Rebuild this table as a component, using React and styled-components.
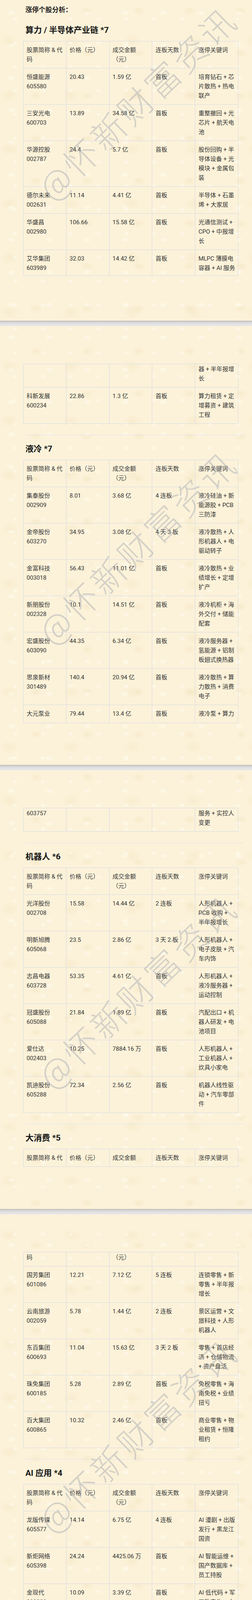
import React from 'react';
import styled, { createGlobalStyle } from 'styled-components';

const GlobalStyle = createGlobalStyle`
  html, body { margin: 0; padding: 0; }
  body {
    background-color: #fcf2d9;
    background-image:
      radial-gradient(ellipse 16px 10px at 30% 40%, rgba(255, 252, 240, 0.7), rgba(255, 252, 240, 0) 70%),
      radial-gradient(ellipse 24px 16px at 70% 25%, rgba(238, 220, 178, 0.35), rgba(238, 220, 178, 0) 70%),
      radial-gradient(ellipse 11px 8px at 55% 80%, rgba(255, 255, 248, 0.6), rgba(255, 255, 248, 0) 70%),
      radial-gradient(ellipse 34px 24px at 15% 75%, rgba(240, 222, 182, 0.3), rgba(240, 222, 182, 0) 70%);
    background-size: 97px 83px, 131px 109px, 71px 61px, 157px 139px;
    font-family: Roboto, "Noto Sans CJK SC", sans-serif;
    color: #333;
  }
`;

const Doc = styled.div`
  position: relative;
  width: 644px;
  overflow: hidden;
`;

const Page = styled.section`
  box-sizing: border-box;
  height: ${(p) => p.$h}px;
  padding-top: ${(p) => p.$top}px;
  overflow: hidden;
`;

const PageBreak = styled.div`
  height: 14px;
  background: linear-gradient(to bottom, #b9b9b9 0, #d2d2d2 22%, #e1e1e1 55%, #e9e9e9 100%);
`;

const Column = styled.div`
  margin-left: 65px;
  width: 558px;
`;

const Intro = styled.p`
  margin: 11px 0 0;
  font-size: 17px;
  line-height: 28px;
  font-weight: 700;
  color: #1e1e1e;
`;

const SectionTitle = styled.h3`
  margin: ${(p) => p.$mt}px 0 14px;
  font-size: 21px;
  line-height: 28px;
  font-weight: 700;
  color: #151515;
`;

const Rule = styled.hr`
  margin: 28px 0 0;
  border: 0;
  height: 1px;
  background: #dfe3ea;
`;

const Table = styled.table`
  width: 550px;
  margin-left: -6px;
  border-collapse: collapse;
  table-layout: fixed;
  font-size: 15px;
  line-height: 24px;
  color: #333;
`;

const cellCss = `
  border: 1px solid #d6dbe4;
  vertical-align: top;
  text-align: left;
  white-space: pre;
  font-weight: 400;
`;

const HeadCell = styled.th`
  ${cellCss}
  padding: ${(p) => p.$pt}px 8px ${(p) => p.$pb}px;
  color: #3a3a3a;
`;

const Cell = styled.td`
  ${cellCss}
  padding: ${(p) => p.$pt}px 8px ${(p) => p.$pb}px;
`;

const Watermark = styled.div`
  position: absolute;
  left: 349px;
  transform: translate(-50%, -50%) rotate(-44deg);
  white-space: nowrap;
  font-family: "Noto Sans CJK SC", sans-serif;
  font-weight: 300;
  font-size: 88px;
  line-height: 88px;
  letter-spacing: 8px;
  color: rgba(160, 165, 175, 0.42);
  pointer-events: none;
`;

const HEAD = ['股票简称 & 代\n码', '价格（元）', '成交金额\n（元）', '连板天数', '涨停关键词'];

const pages = [
  {
    h: 821,
    top: 0,
    blocks: [
      { t: 'intro', text: '涨停个股分析：' },
      { t: 'title', text: '算力 / 半导体产业链 *7', mt: 24 },
      {
        t: 'table',
        head: { c: HEAD },
        rows: [
          { c: ['恒盛能源\n605580', '20.43', '1.59 亿', '首板', '培育钻石 + 芯\n片散热 + 热电\n联产'] },
          { c: ['三安光电\n600703', '13.89', '34.58 亿', '首板', '重整撤回 + 光\n芯片 + 航天电\n池'] },
          { c: ['华源控股\n002787', '24.4', '5.7 亿', '首板', '股份回购 + 半\n导体设备 + 光\n模块 + 金属包\n装'] },
          { c: ['德尔未来\n002631', '11.14', '4.41 亿', '首板', '半导体 + 石墨\n烯 + 大家居'] },
          { c: ['华盛昌\n002980', '106.66', '15.58 亿', '首板', '光通信测试 +\nCPO + 中报增\n长'] },
          { c: ['艾华集团\n603989', '32.03', '14.42 亿', '首板', 'MLPC 薄膜电\n容器 + AI 服务'], pb: 7 },
        ],
      },
    ],
  },
  {
    h: 1123,
    top: 96,
    blocks: [
      {
        t: 'table',
        rows: [
          { c: ['', '', '', '', '器 + 半年报增\n长'], pt: 1 },
          { c: ['科新发展\n600234', '22.86', '1.3 亿', '首板', '算力租赁 + 定\n增募资 + 建筑\n工程'] },
        ],
      },
      { t: 'hr' },
      { t: 'title', text: '液冷 *7', mt: 21 },
      {
        t: 'table',
        head: { c: HEAD },
        rows: [
          { c: ['集泰股份\n002909', '8.01', '3.68 亿', '4 连板', '液冷硅油 + 新\n能源胶 + PCB\n三防漆'] },
          { c: ['金帝股份\n603270', '34.95', '3.08 亿', '4 天 3 板', '液冷散热 + 人\n形机器人 + 电\n驱动转子'] },
          { c: ['金富科技\n003018', '56.43', '11.01 亿', '首板', '液冷散热 + 业\n绩增长 + 定增\n扩产'] },
          { c: ['新朋股份\n002328', '10.1', '14.51 亿', '首板', '液冷机柜 + 海\n外交付 + 储能\n配套'] },
          { c: ['宏盛股份\n603090', '44.35', '6.34 亿', '首板', '液冷服务器 +\n氢能源 + 铝制\n板翅式换热器'] },
          { c: ['思泉新材\n301489', '140.4', '20.94 亿', '首板', '液冷散热 + 算\n力散热 + 消费\n电子'] },
          { c: ['大元泵业', '79.44', '13.4 亿', '首板', '液冷泵 + 算力'], pb: 11 },
        ],
      },
    ],
  },
  {
    h: 1123,
    top: 96,
    blocks: [
      {
        t: 'table',
        rows: [{ c: ['603757', '', '', '', '服务 + 实控人\n变更'], pt: 1 }],
      },
      { t: 'hr' },
      { t: 'title', text: '机器人 *6', mt: 21 },
      {
        t: 'table',
        head: { c: HEAD },
        rows: [
          { c: ['光洋股份\n002708', '15.58', '14.44 亿', '2 连板', '人形机器人 +\nPCB 收购 +\n半年报增长'] },
          { c: ['明新旭腾\n605068', '23.5', '2.86 亿', '3 天 2 板', '人形机器人 +\n电子皮肤 + 汽\n车内饰'] },
          { c: ['志昌电器\n603728', '53.35', '4.61 亿', '首板', '人形机器人 +\n液冷服务器 +\n运动控制'] },
          { c: ['冠盛股份\n605088', '21.84', '1.89 亿', '首板', '汽配出口 + 机\n器人研发 + 电\n池项目'] },
          { c: ['爱仕达\n002403', '10.25', '7884.16 万', '首板', '人形机器人 +\n工业机器人 +\n炊具小家电'] },
          { c: ['凯迪股份\n605288', '72.34', '2.56 亿', '首板', '机器人线性驱\n动 + 汽车零部\n件'] },
        ],
      },
      { t: 'hr' },
      { t: 'title', text: '大消费 *5', mt: 21 },
      {
        t: 'table',
        head: { c: ['股票简称 & 代', '价格（元）', '成交金额', '连板天数', '涨停关键词'] },
        rows: [],
      },
    ],
  },
  {
    h: 1123,
    top: 96,
    blocks: [
      {
        t: 'table',
        head: { c: ['码', '', '（元）', '', ''], pt: 1 },
        rows: [
          { c: ['国芳集团\n601086', '12.21', '7.12 亿', '5 连板', '连锁零售 + 新\n零售 + 半年报\n增长'] },
          { c: ['云南旅游\n002059', '5.78', '1.44 亿', '2 连板', '景区运营 + 文\n旅科技 + 人形\n机器人'] },
          { c: ['东百集团\n600693', '11.04', '15.63 亿', '3 天 2 板', '零售 + 首店经\n济 + 仓储物流\n+ 资产盘活'] },
          { c: ['珠免集团\n600185', '5.28', '2.89 亿', '首板', '免税零售 + 海\n南免税 + 业绩\n扭亏'] },
          { c: ['百大集团\n600865', '10.32', '2.46 亿', '首板', '商业零售 + 物\n业租赁 + 恒隆\n租约'] },
        ],
      },
      { t: 'hr' },
      { t: 'title', text: 'AI 应用 *4', mt: 21 },
      {
        t: 'table',
        head: { c: HEAD },
        rows: [
          { c: ['龙版传媒\n605577', '14.14', '6.75 亿', '4 连板', 'AI 漫剧 + 出版\n发行 + 黑龙江\n国资'] },
          { c: ['新炬网络\n605398', '24.24', '4425.06 万', '首板', 'AI 智能运维 +\n国产数据库 +\n员工持股'] },
          { c: ['金现代\n300830', '10.09', '3.39 亿', '首板', 'AI 低代码 + 军\n工数字化 + 电'], pb: 7 },
        ],
      },
    ],
  },
  {
    h: 1123,
    top: 95,
    blocks: [
      {
        t: 'table',
        rows: [
          { c: ['', '', '', '', '力信息化'], pt: 2 },
          { c: ['海量数据\n603138', '14.5', '1.37 亿', '首板', '多模态数据库\n+ 国产数据库\n+ AI 融合'] },
        ],
      },
      { t: 'hr' },
      { t: 'title', text: '医药 *3', mt: 21 },
      {
        t: 'table',
        head: { c: HEAD },
        rows: [
          { c: ['千金药业\n600479', '14.26', '16.33 亿', '7 天 5 板', '女性健康 + 创\n新药 + 药材种\n植 + 中报增长'] },
          { c: ['美诺华\n603538', '28.49', '17.98 亿', '首板', 'JH389+CDM\nO + 医药制造'] },
          { c: ['德展健康\n000813', '3.61', '4.03 亿', '首板', '创新药 + HPV\n疫苗 + 降血脂\n药'] },
        ],
      },
      { t: 'hr' },
      { t: 'title', text: '无人驾驶 *2', mt: 21 },
      {
        t: 'table',
        head: { c: HEAD },
        rows: [
          { c: ['大众交通\n600611', '5.15', '9.6 亿', '首板', '无人驾驶 + 上\n海出租车 + 间\n接投资江存储'] },
          { c: ['万朗磁塑\n603150', '62.15', '2.81 亿', '首板', '智能转向 + 钕\n铁硼 + 小家电'] },
        ],
      },
      { t: 'hr' },
    ],
  },
  {
    h: 1123,
    top: 96,
    blocks: [
      { t: 'title', text: '其他概念 *10', mt: 0 },
      {
        t: 'table',
        head: { c: HEAD },
        rows: [
          { c: ['太阳电缆\n002300', '8.39', '4.86 亿', '2 连板', '电网设备 + 海\n底电缆 + 电线\n电缆'] },
          { c: ['信达地产\n600657', '3.36', '4.14 亿', '2 连板', '房地产 + 轻资\n产代建 + 央企\n背景'] },
          { c: ['博云新材\n002297', '22', '38.09 亿', '2 连板', '军工材料 + 航\n天材料 + 硬质\n合金 + 业绩增\n长'] },
          { c: ['郴电国际\n600969', '10.7', '2.01 亿', '首板', '氢气 + 电力 +\n业绩增长'] },
          { c: ['中毅达\n600610', '9.49', '6.89 亿', '首板', '季戊四醇 + 产\n品涨价 + 营收\n增长 + 中字头'] },
          { c: ['美能能源\n001299', '11.36', '1.99 亿', '首板', '城镇燃气运营\n+ 储能布局'] },
          { c: ['亚盛集团\n600108', '3.96', '7.31 亿', '首板', '玉米制种 + 现\n代农业 + 甘肃\n国资'] },
          { c: ['嘉美包装\n002969', '13.41', '5.19 亿', '首板', '实控人变更 +\n食品金属包装\n+ 饮料灌装'] },
          { c: ['海通发展\n603162', '13.31', '10.22 亿', '首板', '干散货航运 +\n运力扩张 + 中\n报增长'] },
        ],
      },
    ],
  },
  {
    h: 213,
    top: 96,
    blocks: [
      {
        t: 'table',
        rows: [{ c: ['白银有色\n601212', '7.33', '41.62 亿', '首板', '白银 + 黄金 +\n多金属综合 +\n锂电材料'] }],
      },
    ],
  },
];

const WATERMARK_TOPS = [262, 1399, 2536, 3673, 4810, 5947];

function StockTable({ head, rows }) {
  return (
    <Table>
      <tbody>
        {head && (
          <tr>
            {head.c.map((text, i) => (
              <HeadCell key={i} $pt={head.pt ?? 10} $pb={head.pb ?? 10}>
                {text}
              </HeadCell>
            ))}
          </tr>
        )}
        {rows.map((row, r) => (
          <tr key={r}>
            {row.c.map((text, i) => (
              <Cell key={i} $pt={row.pt ?? 10} $pb={row.pb ?? 10}>
                {text}
              </Cell>
            ))}
          </tr>
        ))}
      </tbody>
    </Table>
  );
}

function Block({ b }) {
  if (b.t === 'intro') return <Intro>{b.text}</Intro>;
  if (b.t === 'title') return <SectionTitle $mt={b.mt}>{b.text}</SectionTitle>;
  if (b.t === 'hr') return <Rule />;
  return <StockTable head={b.head} rows={b.rows} />;
}

export default function App() {
  return (
    <>
      <GlobalStyle />
      <Doc>
        {pages.map((pg, i) => (
          <React.Fragment key={i}>
            {i > 0 && <PageBreak />}
            <Page $h={pg.h} $top={pg.top}>
              <Column>
                {pg.blocks.map((b, j) => (
                  <Block key={j} b={b} />
                ))}
              </Column>
            </Page>
          </React.Fragment>
        ))}
        {WATERMARK_TOPS.map((top) => (
          <Watermark key={top} style={{ top }}>
            @怀新财富资讯
          </Watermark>
        ))}
      </Doc>
    </>
  );
}
